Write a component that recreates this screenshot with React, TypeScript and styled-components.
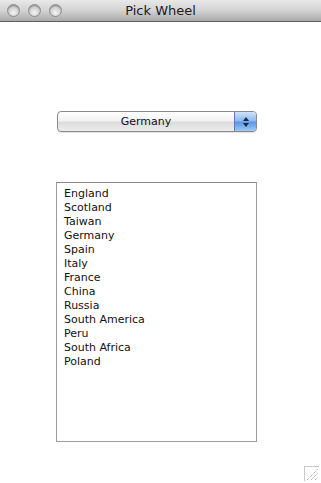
import styled, { createGlobalStyle } from "styled-components";

const GlobalStyle = createGlobalStyle`
  html, body {
    margin: 0;
    padding: 0;
    background: #ffffff;
  }
  body {
    font-family: "DejaVu Sans", "Liberation Sans", sans-serif;
  }
`;

const countries = [
  "England",
  "Scotland",
  "Taiwan",
  "Germany",
  "Spain",
  "Italy",
  "France",
  "China",
  "Russia",
  "South America",
  "Peru",
  "South Africa",
  "Poland",
];

const Window = styled.div`
  position: relative;
  width: 321px;
  height: 483px;
  display: flex;
  flex-direction: column;
  background: #ffffff;
  overflow: hidden;
`;

const TitleBar = styled.div`
  height: 21px;
  border-bottom: 1px solid #5e5e5e;
  background: linear-gradient(#e8e8e8 0%, #d3d3d3 50%, #a9a9a9 100%);
  display: flex;
  align-items: center;
  position: relative;
`;

const Lights = styled.div`
  display: flex;
  gap: 8px;
  padding-left: 7px;
`;

const Light = styled.span`
  width: 13px;
  height: 13px;
  border-radius: 50%;
  box-sizing: border-box;
  border: 1px solid #8e8e8e;
  background: radial-gradient(circle at 50% 70%, #f4f4f4 0%, #cfcfcf 55%, #a8a8a8 100%);
  box-shadow: inset 0 1px 1px rgba(0, 0, 0, 0.25);
`;

const Title = styled.div`
  position: absolute;
  left: 0;
  right: 0;
  text-align: center;
  font-size: 13px;
  color: #1a1a1a;
  line-height: 21px;
`;

const Content = styled.div`
  flex: 1;
  display: flex;
  flex-direction: column;
  align-items: flex-start;
  padding: 89px 0 0 57px;
`;

const Popup = styled.div`
  width: 200px;
  height: 21px;
  box-sizing: border-box;
  border: 1px solid #8a8a8a;
  border-radius: 4px;
  background: linear-gradient(#ffffff 0%, #f2f2f2 45%, #dcdcdc 55%, #ededed 100%);
  display: flex;
  overflow: hidden;
  box-shadow: 0 1px 1px rgba(0, 0, 0, 0.12);
`;

const PopupLabel = styled.div`
  flex: 1;
  text-align: center;
  font-size: 11px;
  line-height: 19px;
  color: #111;
`;

const Stepper = styled.div`
  width: 21px;
  border-left: 1px solid #5a7fb8;
  background: linear-gradient(#cfe3fb 0%, #8fbaf0 45%, #5c98e6 55%, #9fcaf8 100%);
  display: flex;
  flex-direction: column;
  align-items: center;
  justify-content: center;
  gap: 2px;
`;

const Arrow = styled.span<{ $up?: boolean }>`
  width: 0;
  height: 0;
  border-left: 3px solid transparent;
  border-right: 3px solid transparent;
  ${(p) =>
    p.$up
      ? "border-bottom: 4px solid #1c2a44;"
      : "border-top: 4px solid #1c2a44;"}
`;

const ListBox = styled.div`
  margin-top: 50px;
  margin-left: -1px;
  width: 201px;
  height: 260px;
  box-sizing: border-box;
  border: 1px solid #9d9d9d;
  border-top-color: #8a8a8a;
  padding: 4px 0 0 7px;
  background: #ffffff;
`;

const Row = styled.div`
  font-size: 11px;
  line-height: 14px;
  color: #111;
`;

const Grip = styled.svg`
  position: absolute;
  right: 2px;
  bottom: 2px;
`;

const App = () => {
  return (
    <>
      <GlobalStyle />
      <Window>
        <TitleBar>
          <Lights>
            <Light />
            <Light />
            <Light />
          </Lights>
          <Title>Pick Wheel</Title>
        </TitleBar>
        <Content>
          <Popup>
            <PopupLabel>Germany</PopupLabel>
            <Stepper>
              <Arrow $up />
              <Arrow />
            </Stepper>
          </Popup>
          <ListBox>
            {countries.map((c) => (
              <Row key={c}>{c}</Row>
            ))}
          </ListBox>
        </Content>
        <Grip width="15" height="15" viewBox="0 0 15 15">
          <line x1="0.5" y1="0" x2="0.5" y2="15" stroke="#c8c8c8" />
          <line x1="0" y1="0.5" x2="15" y2="0.5" stroke="#c8c8c8" />
          <line x1="3" y1="14" x2="14" y2="3" stroke="#9a9a9a" strokeDasharray="1 1" />
          <line x1="7" y1="14" x2="14" y2="7" stroke="#9a9a9a" strokeDasharray="1 1" />
          <line x1="11" y1="14" x2="14" y2="11" stroke="#9a9a9a" strokeDasharray="1 1" />
        </Grip>
      </Window>
    </>
  );
};

export default App;
